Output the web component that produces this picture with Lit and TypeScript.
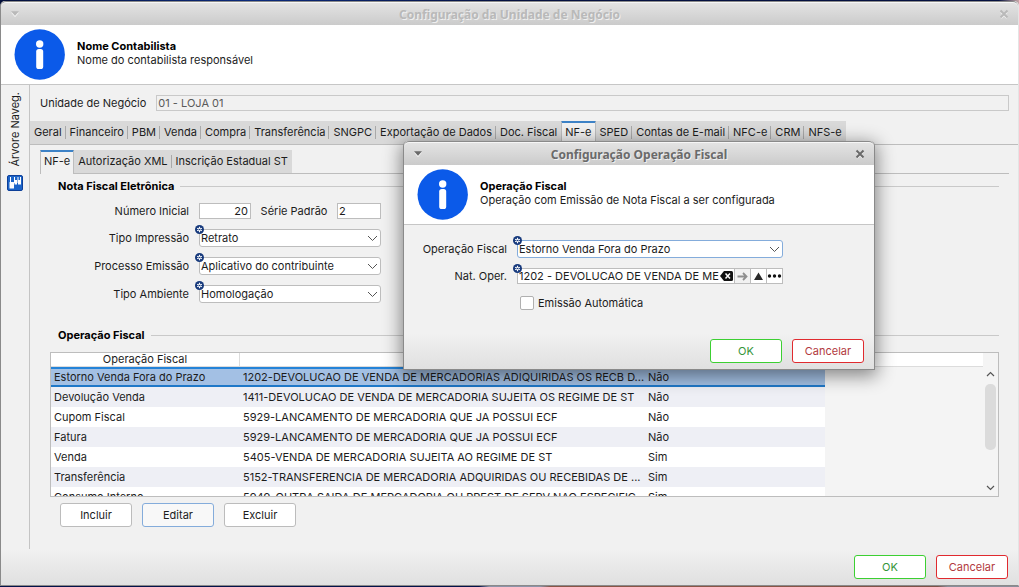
import { LitElement, html, css, svg, nothing } from "lit";
import { customElement, property } from "lit/decorators.js";
import { classMap } from "lit/directives/class-map.js";

const base = css`
  *, *::before, *::after { box-sizing: border-box; }
  button, input, select { font: inherit; color: inherit; margin: 0; border-radius: 0; }
  button { cursor: default; }
`;

const requiredBadge = html`<svg class="badge" width="9" height="9" viewBox="0 0 9 9" aria-hidden="true">
  <circle cx="4.5" cy="4.5" r="4.5" fill="#16397c" />
  <path d="M4.5 1.8v5.4M2.2 3.2l4.6 2.6M6.8 3.2L2.2 5.8" stroke="#fff" stroke-width="1.2" />
  <circle cx="4.5" cy="4.5" r=".7" fill="#16397c" />
</svg>`;

@customElement("window-frame")
class WindowFrame extends LitElement {
  @property() caption = "";
  @property() heading = "";
  @property() detail = "";
  @property({ type: Boolean, reflect: true }) inactive = false;

  static styles = [base, css`
    :host {
      display: flex; flex-direction: column; min-height: 0;
      background: #f1f1f1; border: 1px solid #8a8a8a; border-top: 0;
      border-radius: 5px 5px 0 0; overflow: hidden;
    }
    :host([inactive]) { border-right-color: #e4e4e4; }
    .title {
      flex: none; height: 24px; display: grid; grid-template-columns: 28px 1fr 28px; align-items: center;
      background: linear-gradient(#e4e4e4, #cbcbcb); border-top: 1px solid #8a8a8a;
      box-shadow: inset 0 1px #f6f6f6; border-radius: 5px 5px 0 0;
      font: bold 12px/22px "Noto Sans", sans-serif; color: #6a6a6a; text-align: center;
      text-shadow: 1px 1px #efefef;
    }
    :host([inactive]) .title { color: #b9b9b9; }
    .tool {
      width: 28px; height: 22px; padding: 0; border: 0; background: none;
      display: flex; align-items: center; justify-content: center;
    }
    .caption { margin: 0; padding-top: 2px; font: inherit; }
    .banner {
      flex: none; height: 60px; display: flex; align-items: center; gap: 12px;
      padding: 0 14px 1px 13px; background: #fff; border-bottom: 1px solid #c6c6c6;
    }
    .banner p { margin: 0; line-height: 14px; }
    .banner .strong { font-weight: 700; color: #000; }
    .words { padding-bottom: 3px; }
  `];

  render() {
    return html`
      <header class="title">
        <button class="tool" aria-label="Menu">
          <svg width="10" height="8" viewBox="0 0 10 8"><path d="M1 2.5h8L5 7.2z" fill="#f2f2f2" /><path d="M1 1.2h8L5 5.8z" fill="currentColor" /></svg>
        </button>
        <h1 class="caption">${this.caption}</h1>
        <button class="tool" aria-label="Fechar">
          <svg width="10" height="10" viewBox="0 0 10 10" fill="none"><path d="M2 3l6 6M8 3L2 9" stroke="#f2f2f2" stroke-width="2" /><path d="M1.5 1.5l7 7M8.5 1.5l-7 7" stroke="currentColor" stroke-width="2" /></svg>
        </button>
      </header>
      <div class="banner">
        <svg width="51" height="51" viewBox="0 0 51 51" aria-hidden="true">
          <circle cx="25.7" cy="25.5" r="25.2" fill="#0b5ae9" />
          <circle cx="25.7" cy="15" r="3.7" fill="#fff" />
          <rect x="22.2" y="20" width="7" height="20" rx="2.6" fill="#fff" />
        </svg>
        <div class="words"><p class="strong">${this.heading}</p><p>${this.detail}</p></div>
      </div>
      <slot></slot>`;
  }
}

@customElement("push-button")
class PushButton extends LitElement {
  @property() kind = "";
  static styles = [base, css`
    :host { display: block; }
    .btn {
      width: 72px; height: 24px; padding: 0; background: #fff; border: 1px solid #bcbcbc;
      border-radius: 3px; line-height: 22px; text-align: center; display: block;
    }
    .focus { border-color: #84acdb; background: #f8f8f8; }
    .ok { border-color: #3ccf32; color: #35953a; }
    .cancel { border-color: #e02a2f; color: #b23a3e; }
  `];
  render() {
    return html`<button class=${"btn " + this.kind}><slot></slot></button>`;
  }
}

@customElement("combo-box")
class ComboBox extends LitElement {
  @property() label = "";
  @property() value = "";
  @property({ type: Boolean }) focused = false;
  static styles = [base, css`
    :host { display: contents; }
    label { text-align: right; white-space: nowrap; }
    .field { position: relative; display: flex; align-items: center; justify-content: flex-end; height: 18px; }
    select {
      appearance: none; width: 100%; height: 18px; padding: 0 20px 0 1px; background: #fff; outline: 0;
      border: 1px solid #bdbdbd; border-radius: 3px; line-height: 16px;
    }
    .focused select { border-color: #84acdb; }
    .badge { position: absolute; left: -4px; top: -4px; }
    .chevron { position: absolute; right: 3px; top: 6px; pointer-events: none; }
  `];
  render() {
    return html`
      <label for="s">${this.label}</label>
      <span class=${classMap({ field: true, focused: this.focused })}>
        <select id="s"><option>${this.value}</option></select>
        <svg class="chevron" width="11" height="7" viewBox="0 0 11 7" fill="none"><path d="M1 1l4.5 4.5L10 1" stroke="#555" /></svg>
        ${requiredBadge}
      </span>`;
  }
}

@customElement("tab-strip")
class TabStrip extends LitElement {
  @property({ attribute: false }) tabs: string[] = [];
  @property() current = "";
  static styles = [base, css`
    :host { display: block; border-bottom: 1px solid #bdbdbd; }
    .strip { display: flex; width: max-content; background: #d9d9d9; }
    .tab {
      position: relative; height: 23px; padding: 0 4px; border: 0; background: none;
      white-space: nowrap; line-height: 23px;
    }
    .tab.sep::after {
      content: ""; position: absolute; right: 0; top: 5px; bottom: 5px; width: 1px; background: #a9a9a9;
    }
    .tab.on {
      height: 24px; margin-bottom: -1px; background: #f1f1f1; padding: 0 3px 2px;
      border: 1px solid #bdbdbd; border-bottom: 0; box-shadow: inset 0 1px #3d82c6; border-top-color: #3d82c6;
      line-height: 21px;
    }
  `];
  render() {
    const on = this.tabs.indexOf(this.current);
    return html`<div class="strip" role="tablist">
      ${this.tabs.map((t, i) => html`<button role="tab" aria-selected=${i === on}
        class=${classMap({ tab: true, on: i === on, sep: i !== on && i !== on - 1 && i < this.tabs.length - 1 })}>${t}</button>`)}
    </div>`;
  }
}

const mainTabs = ["Geral", "Financeiro", "PBM", "Venda", "Compra", "Transferência", "SNGPC",
  "Exportação de Dados", "Doc. Fiscal", "NF-e", "SPED", "Contas de E-mail", "NFC-e", "CRM", "NFS-e"];
const invoiceTabs = ["NF-e", "Autorização XML", "Inscrição Estadual ST"];

const operations: [string, string, string][] = [
  ["Estorno Venda Fora do Prazo", "1202-DEVOLUCAO DE VENDA DE MERCADORIAS ADIQUIRIDAS OS RECB D...", "Não"],
  ["Devolução Venda", "1411-DEVOLUCAO DE VENDA DE MERCADORIA SUJEITA OS REGIME DE ST", "Não"],
  ["Cupom Fiscal", "5929-LANCAMENTO DE MERCADORIA QUE JA POSSUI ECF", "Não"],
  ["Fatura", "5929-LANCAMENTO DE MERCADORIA QUE JA POSSUI ECF", "Não"],
  ["Venda", "5405-VENDA DE MERCADORIA SUJEITA AO REGIME DE ST", "Sim"],
  ["Transferência", "5152-TRANSFERENCIA DE MERCADORIA ADQUIRIDAS OU RECEBIDAS DE ...", "Sim"],
  ["Consumo Interno", "5949-OUTRA SAIDA DE MERCADORIA OU PREST DE SERV NAO ESPECIFIC...", "Sim"],
];

const scrollArrow = (d: string) => html`<svg width="9" height="6" viewBox="0 0 9 6" fill="none">
  ${svg`<path d=${d} stroke="#555" stroke-width="1.2" />`}</svg>`;

@customElement("app-root")
class AppRoot extends LitElement {
  static styles = [base, css`
    :host {
      box-sizing: border-box;
      display: flex; flex-direction: column; position: relative; height: 100vh; padding: 1px 0; overflow: hidden;
      background:
        linear-gradient(90deg, #04124a 47%, #8d93a8 48% 53%, #8a5546 54% 76%, #7d5148 92%, #8b8d9a 93%) bottom / 100% 2px no-repeat,
        linear-gradient(90deg, #04103a, #0a2a7c 25%, #04103f 50% 98%, #c9a9a9 100%);
      font: 11px/14px Inter, sans-serif; color: #1c1c1c;
    }
    .main { flex: 1; }
    .body { flex: 1; min-height: 0; display: flex; }
    .rail {
      flex: none; width: 29px; border-right: 1px solid #c4c4c4; padding-top: 7px;
      display: flex; flex-direction: column; align-items: center;
    }
    .rail-btn {
      border: 0; background: none; padding: 0; display: flex; flex-direction: column; align-items: center; gap: 8px;
    }
    .rail-text { writing-mode: vertical-rl; transform: rotate(180deg); line-height: 14px; }
    .content { flex: 1; min-width: 0; display: flex; flex-direction: column; }
    .unit { display: flex; align-items: center; gap: 10px; padding: 10px 9px 10px 10px; }
    .box { height: 16px; padding: 0 2px 0 1px; border: 1px solid #bdbdbd; background: #fff; outline: 0; min-width: 0; line-height: 14px; }
    .unit .box { flex: 1; background: #f1f1f1; border-color: #c9c9c9; color: #5a5a5a; }
    .page { flex: 1; min-height: 0; display: flex; flex-direction: column; padding: 5px 9px 22px 10px; }
    .group { display: flex; align-items: center; gap: 6px; margin: 0; padding: 0 10px 0 18px; font: 700 11px/14px Inter, sans-serif; color: #000; }
    .group::after { content: ""; flex: 1; height: 1px; background: #c9c9c9; }
    .panel { flex: 1; min-height: 0; display: flex; flex-direction: column; padding-top: 5px; }
    .form {
      display: grid; grid-template-columns: 149px 182px; column-gap: 10px; row-gap: 10px; align-items: center;
      padding: 10px 0 25px;
    }
    .form label { text-align: right; }
    .pair { display: flex; justify-content: space-between; align-items: center; }
    .short { width: 52px; text-align: right; }
    .series { width: 44px; }
    .grid {
      flex: 1; min-height: 0; margin: 10px 10px 0; border: 1px solid #bdbdbd; background: #f4f4f4;
      display: grid; grid-template-columns: 1fr 15px; grid-template-rows: 100%; overflow: hidden;
    }
    .view { overflow: hidden; min-width: 0; }
    table { width: 100%; table-layout: fixed; border-collapse: separate; border-spacing: 0; }
    th { height: 14px; padding: 0; font-weight: 400; line-height: 13px; background: #fff; border-bottom: 1px solid #dcdcdc; border-right: 1px solid #dcdcdc; }
    th:last-child { border-right: 0; }
    td { height: 20px; padding: 0 3px; line-height: 20px; white-space: nowrap; background: #fff; }
    tr:nth-child(even) td { background: #eeeff5; }
    tr td:last-child, tr:nth-child(even) td:last-child { background: none; }
    .sel td:not(:last-child) {
      background: #a3c0e4; line-height: 16px; border-top: 2px solid #2483d8; border-bottom: 2px solid #1f78c8;
    }
    .scroll { display: flex; flex-direction: column; align-items: center; padding: 18px 0 5px; }
    .thumb { width: 11px; height: 66px; margin-top: 7px; border-radius: 5px; background: #dbdbdb; }
    .grow { flex: 1; }
    .actions { display: flex; gap: 10px; padding: 6px 20px 0; }
    .foot {
      flex: none; height: 36px; display: flex; justify-content: flex-end; gap: 10px; padding: 6px 10px;
      background: linear-gradient(#f1f1f1, #e0e0e0);
    }
    .dialog {
      position: absolute; left: 403px; top: 141px; width: 472px;
      box-shadow: 0 4px 18px 2px rgba(0, 0, 0, .45);
    }
    .dialog .form { grid-template-columns: 103px 266px; padding: 15px 0 21px; row-gap: 10px; }
    .nat { position: relative; display: flex; height: 16px; }
    .lookup { position: relative; flex: 1; min-width: 0; display: flex; }
    .lookup .box { width: 100%; padding: 0 15px 0 1px; }
    .badge { position: absolute; left: -4px; top: -4px; }
    .clear { position: absolute; right: 2px; top: 3px; padding: 0; border: 0; background: none; height: 10px; display: flex; }
    .mini {
      width: 16px; height: 16px; padding: 0; border: 1px solid #bdbdbd; border-left-width: 0; background: #fff;
      display: flex; align-items: center; justify-content: center;
    }
    .mini.off { background: #f1f1f1; }
    .form .check { grid-column: 2; display: flex; align-items: center; gap: 4px; padding: 2px 3px; text-align: left; }
    .check input { appearance: none; width: 14px; height: 14px; background: #fff; border: 1px solid #b0b0b0; border-radius: 2px; }
  `];

  render() {
    return html`
      <window-frame class="main" inactive caption="Configuração da Unidade de Negócio"
        heading="Nome Contabilista" detail="Nome do contabilista responsável">
        <div class="body">
          <nav class="rail">
            <button class="rail-btn">
              <span class="rail-text">Árvore Naveg.</span>
              <svg width="16" height="16" viewBox="0 0 16 16" aria-hidden="true">
                <rect x=".5" y=".5" width="15" height="15" rx="1.5" fill="#1c64c8" stroke="#0d3f98" />
                <path d="M3.5 2v5M7.5 2v6M11 2v6M13.5 2v6" stroke="#fff" fill="none" />
                <rect x="2.5" y="7" width="4.5" height="6.5" rx=".5" fill="#fff" />
                <rect x="7.5" y="5" width="2.5" height="4.5" fill="#fff" />
                <rect x="11" y="5" width="3" height="4.5" fill="#fff" />
              </svg>
            </button>
          </nav>
          <div class="content">
            <div class="unit">
              <label for="unit">Unidade de Negócio</label>
              <input id="unit" class="box" readonly .value=${"01 - LOJA 01"} />
            </div>
            <tab-strip .tabs=${mainTabs} current="NF-e"></tab-strip>
            <div class="page">
              <tab-strip .tabs=${invoiceTabs} current="NF-e"></tab-strip>
              <div class="panel">
                <h2 class="group">Nota Fiscal Eletrônica</h2>
                <div class="form">
                  <label for="num">Número Inicial</label>
                  <span class="pair">
                    <input id="num" class="box short" .value=${"20"} />
                    <label for="serie">Série Padrão</label>
                    <input id="serie" class="box series" .value=${"2"} />
                  </span>
                  <combo-box label="Tipo Impressão" value="Retrato"></combo-box>
                  <combo-box label="Processo Emissão" value="Aplicativo do contribuinte"></combo-box>
                  <combo-box label="Tipo Ambiente" value="Homologação"></combo-box>
                </div>
                <h2 class="group">Operação Fiscal</h2>
                <div class="grid">
                  <div class="view">
                    <table>
                      <colgroup><col style="width:189px"><col style="width:405px"><col style="width:180px"><col></colgroup>
                      <thead><tr><th>Operação Fiscal</th><th></th><th></th><th></th></tr></thead>
                      <tbody>
                        ${operations.map((r, i) => html`<tr class=${i === 0 ? "sel" : nothing}>
                          ${r.map((c) => html`<td>${c}</td>`)}<td></td></tr>`)}
                      </tbody>
                    </table>
                  </div>
                  <div class="scroll">
                    ${scrollArrow("M1 5l3.5-3.5L8 5")}
                    <div class="thumb"></div>
                    <div class="grow"></div>
                    ${scrollArrow("M1 1l3.5 3.5L8 1")}
                  </div>
                </div>
                <div class="actions">
                  <push-button>Incluir</push-button>
                  <push-button kind="focus">Editar</push-button>
                  <push-button>Excluir</push-button>
                </div>
              </div>
            </div>
          </div>
        </div>
        <footer class="foot">
          <push-button kind="ok">OK</push-button>
          <push-button kind="cancel">Cancelar</push-button>
        </footer>
      </window-frame>

      <window-frame class="dialog" role="dialog" caption="Configuração Operação Fiscal"
        heading="Operação Fiscal" detail="Operação com Emissão de Nota Fiscal a ser configurada">
        <div class="form">
          <combo-box focused label="Operação Fiscal" value="Estorno Venda Fora do Prazo"></combo-box>
          <label for="nat">Nat. Oper.</label>
          <span class="nat">
            <span class="lookup">
              <input id="nat" class="box" .value=${"1202 - DEVOLUCAO DE VENDA DE ME"} />
              <button class="clear" aria-label="Limpar">
                <svg width="13" height="10" viewBox="0 0 13 10"><path d="M4 0h7.5A1.5 1.5 0 0 1 13 1.5v7a1.5 1.5 0 0 1-1.5 1.5H4L0 5z" fill="#111" /><path d="M5.5 2.5l4.5 5M10 2.5l-4.5 5" stroke="#fff" stroke-width="1.5" /></svg>
              </button>
            </span>
            <button class="mini off" aria-label="Ir">
              <svg width="11" height="9" viewBox="0 0 11 9" fill="none"><path d="M0.5 4.5h9M6 1l3.5 3.5L6 8" stroke="#8f8f8f" stroke-width="1.8" /></svg>
            </button>
            <button class="mini" aria-label="Subir">
              <svg width="9" height="8" viewBox="0 0 9 8"><path d="M4.5 0.5L9 8H0z" fill="#2b2b2b" /></svg>
            </button>
            <button class="mini" aria-label="Mais">
              <svg width="15" height="4" viewBox="0 0 15 4" fill="#111"><circle cx="2.5" cy="2" r="1.7" /><circle cx="7.5" cy="2" r="1.7" /><circle cx="12.5" cy="2" r="1.7" /></svg>
            </button>
            ${requiredBadge}
          </span>
          <label class="check"><input type="checkbox" />Emissão Automática</label>
        </div>
        <footer class="foot">
          <push-button kind="ok">OK</push-button>
          <push-button kind="cancel">Cancelar</push-button>
        </footer>
      </window-frame>`;
  }
}
